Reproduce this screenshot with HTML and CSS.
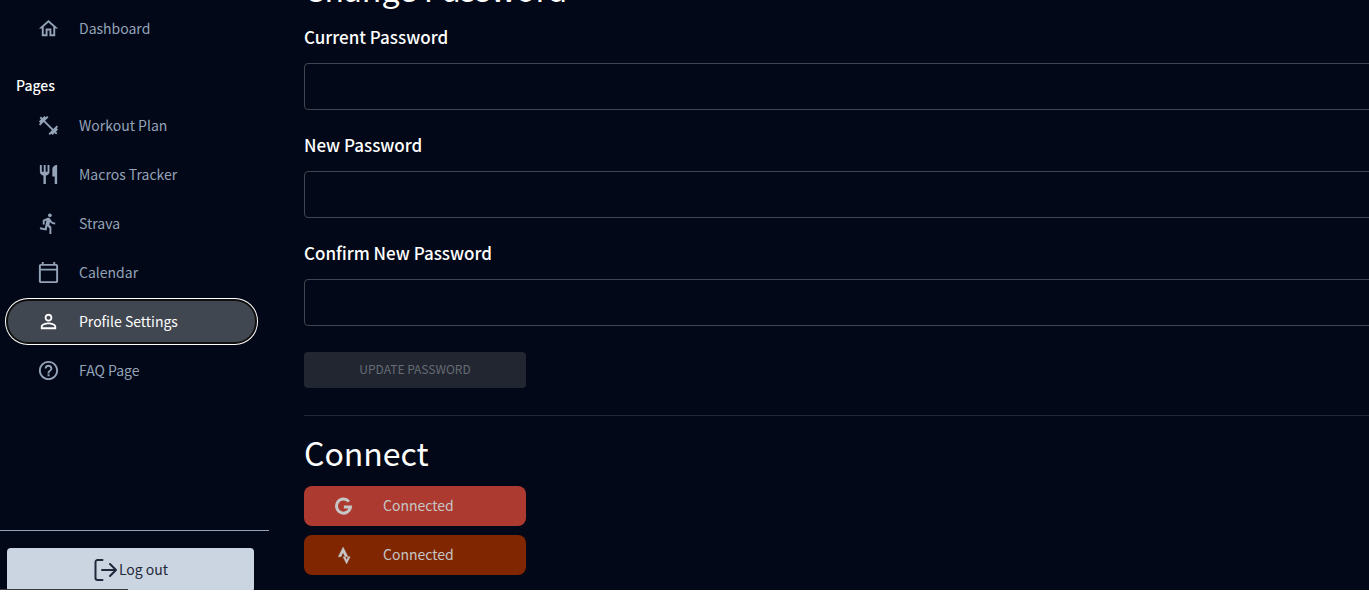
FILE: index.html
```html
<!DOCTYPE html>
<html lang="en">
<head>
<meta charset="utf-8">
<title>Profile Settings</title>
<link rel="stylesheet" href="styles.css">
</head>
<body>
<div class="app">
  <aside class="sidebar">
    <nav class="nav" aria-label="Main">
      <a class="nav-item" href="#dashboard"><svg class="icon" viewBox="0 0 24 24"><path d="M12 5.69l5 4.5V18h-2v-6H9v6H7v-7.81l5-4.5M12 3 2 12h3v8h6v-6h2v6h6v-8h3L12 3z"/></svg><span class="text">Dashboard</span></a>
      <h2 class="nav-title">Pages</h2>
      <a class="nav-item" href="#workout"><svg class="icon" viewBox="0 0 24 24"><path d="M20.57 14.86L22 13.43 20.57 12 17 15.57 8.43 7 12 3.43 10.57 2 9.14 3.43 7.71 2 5.57 4.14 4.14 2.71 2.71 4.14l1.43 1.43L2 7.71l1.43 1.43L2 10.57 3.43 12 7 8.43 15.57 17 12 20.57 13.43 22l1.43-1.43L16.29 22l2.14-2.14 1.43 1.43 1.43-1.43-1.43-1.43L22 16.29z"/></svg><span class="text">Workout Plan</span></a>
      <a class="nav-item" href="#macros"><svg class="icon" viewBox="0 0 24 24"><path d="M11 9H9V2H7v7H5V2H3v7c0 2.12 1.66 3.84 3.75 3.97V22h2.5v-9.03C11.34 12.84 13 11.12 13 9V2h-2v7zm5-3v8h2.5v8H21V2c-2.76 0-5 2.24-5 4z"/></svg><span class="text">Macros Tracker</span></a>
      <a class="nav-item" href="#strava"><svg class="icon" viewBox="0 0 24 24"><path d="M13.49 5.48c1.1 0 2-.9 2-2s-.9-2-2-2-2 .9-2 2 .9 2 2 2zm-3.6 13.9l1-4.4 2.1 2v6h2v-7.5l-2.1-2 .6-3c1.3 1.5 3.3 2.5 5.5 2.5v-2c-1.9 0-3.5-1-4.3-2.4l-1-1.6c-.4-.6-1-1-1.7-1-.3 0-.5.1-.8.1l-5.2 2.2v4.7h2v-3.4l1.8-.7-1.6 8.1-4.9-1-.4 2 7 1.4z"/></svg><span class="text">Strava</span></a>
      <a class="nav-item" href="#calendar"><svg class="icon" viewBox="0 0 24 24"><path d="M20 3h-1V1h-2v2H7V1H5v2H4c-1.1 0-2 .9-2 2v16c0 1.1.9 2 2 2h16c1.1 0 2-.9 2-2V5c0-1.1-.9-2-2-2zm0 18H4V10h16v11zm0-13H4V5h16v3z"/></svg><span class="text">Calendar</span></a>
      <a class="nav-item active" href="#profile" aria-current="page"><svg class="icon" viewBox="0 0 24 24"><path d="M12 5.9c1.16 0 2.1.94 2.1 2.1s-.94 2.1-2.1 2.1S9.9 9.16 9.9 8s.94-2.1 2.1-2.1m0 9c2.97 0 6.1 1.46 6.1 2.1v1.1H5.9V17c0-.64 3.13-2.1 6.1-2.1M12 4C9.79 4 8 5.79 8 8s1.79 4 4 4 4-1.79 4-4-1.79-4-4-4zm0 9c-2.67 0-8 1.34-8 4v3h16v-3c0-2.66-5.33-4-8-4z"/></svg><span class="text">Profile Settings</span></a>
      <a class="nav-item" href="#faq"><svg class="icon" viewBox="0 0 24 24"><path d="M11 18h2v-2h-2v2zm1-16C6.48 2 2 6.48 2 12s4.48 10 10 10 10-4.48 10-10S17.52 2 12 2zm0 18c-4.41 0-8-3.59-8-8s3.59-8 8-8 8 3.59 8 8-3.59 8-8 8zm0-14c-2.21 0-4 1.79-4 4h2c0-1.1.9-2 2-2s2 .9 2 2c0 2-3 1.75-3 5h2c0-2.25 3-2.5 3-5 0-2.21-1.79-4-4-4z"/></svg><span class="text">FAQ Page</span></a>
    </nav>
    <div class="sidebar-footer">
      <button class="logout" type="button"><svg class="logout-icon" viewBox="0 0 24 24"><path d="M9.5 2H4.5a2 2 0 0 0-2 2v16a2 2 0 0 0 2 2h5M9 12h14M17 6l6 6-6 6"/></svg><span class="text">Log out</span></button>
    </div>
    <div class="status-strip"></div>
  </aside>
  <main class="content">
    <h1 class="heading">Change Password</h1>
    <form class="form">
      <div class="field"><label for="current">Current Password</label><input id="current" type="password"></div>
      <div class="field"><label for="new">New Password</label><input id="new" type="password"></div>
      <div class="field"><label for="confirm">Confirm New Password</label><input id="confirm" type="password"></div>
      <button class="update" type="submit" disabled>UPDATE PASSWORD</button>
    </form>
    <hr class="divider">
    <h1 class="heading">Connect</h1>
    <div class="connections">
      <button class="connect google" type="button"><svg class="brand" viewBox="0 0 24 24"><path fill="none" stroke="currentColor" stroke-width="3.4" d="M18.2 6.4A8 8 0 1 0 20 12.6H12.4"/></svg><span class="text">Connected</span></button>
      <button class="connect strava" type="button"><svg class="brand" viewBox="-4 -3 30 30"><path d="M15.387 17.944l-2.089-4.116h-3.065L15.387 24l5.15-10.172h-3.066m-7.008-5.599l2.836 5.598h4.172L10.463 0l-7 13.828h4.169" stroke="currentColor" stroke-width=".5"/></svg><span class="text">Connected</span></button>
    </div>
  </main>
</div>
</body>
</html>
```
FILE: styles.css
```css
* { box-sizing: border-box; }

body {
  margin: 0;
  height: 100vh;
  padding-bottom: 19px;
  background: #fff;
  font-family: "Noto Sans CJK SC", "Noto Sans", sans-serif;
  font-size: 14px;
  line-height: 20px;
  overflow: hidden;
}

button { font: inherit; border: 0; }

.app {
  display: flex;
  height: 100%;
  overflow: hidden;
  background: #020817;
  color: #fff;
}

.sidebar {
  position: relative;
  flex: none;
  display: flex;
  flex-direction: column;
  width: 269px;
}

.nav {
  display: flex;
  flex-direction: column;
  gap: 8px;
  padding: 8px 14px 0 8px;
}

.nav-item {
  display: flex;
  align-items: center;
  gap: 19px;
  height: 41px;
  padding-left: 29px;
  border-radius: 20px;
  color: #94a3b8;
  text-decoration: none;
}

.nav-item.active {
  background: #414751;
  color: #fff;
  box-shadow: 0 0 0 2px #101010, 0 0 0 3px #fff;
}

.text { padding-bottom: 2px; }

.nav-title {
  margin: 18px 8px 2px;
  font-size: 14px;
  font-weight: 500;
}

.icon {
  width: 23px;
  height: 23px;
  fill: currentColor;
}

.sidebar-footer {
  height: 60px;
  margin-top: auto;
  padding: 17px 15px 0 7px;
  border-top: 1px solid #94a3b8;
}

.logout {
  display: flex;
  align-items: center;
  justify-content: center;
  gap: 2px;
  width: 100%;
  height: 44px;
  border-radius: 4px;
  background: #cbd5e1;
  color: #1e293b;
}

.logout-icon {
  width: 24px;
  height: 24px;
  fill: none;
  stroke: #1e293b;
  stroke-width: 2;
  stroke-linecap: round;
  stroke-linejoin: round;
}

.status-strip {
  position: absolute;
  left: 0;
  bottom: 0;
  width: 128px;
  height: 1px;
  background: #3c3c3c;
}

.content {
  flex: 1;
  min-width: 0;
  margin: -32px -16px 0 0;
  padding-left: 35px;
}

.heading {
  margin: 0;
  font-size: 32px;
  font-weight: 400;
  line-height: 40px;
}

.form {
  display: flex;
  flex-direction: column;
  gap: 23px;
  padding-top: 17px;
}

.field {
  display: flex;
  flex-direction: column;
  gap: 14px;
}

.field label {
  font-size: 17px;
  font-weight: 500;
  line-height: 24px;
}

.field input {
  width: 100%;
  height: 47px;
  padding: 0 14px;
  border: 1px solid #414550;
  border-radius: 4px;
  background: transparent;
  color: #fff;
  font: inherit;
}

.update {
  width: 222px;
  height: 36px;
  margin-top: 3px;
  padding-bottom: 3px;
  border-radius: 4px;
  background: #212631;
  color: #666b74;
  font-size: 12px;
}

.divider {
  margin: 27px 0 16px;
  border: 0;
  border-top: 1px solid #222834;
}

.connections {
  display: flex;
  flex-direction: column;
  gap: 9px;
  padding-top: 14px;
}

.connect {
  display: flex;
  align-items: center;
  gap: 29px;
  width: 222px;
  height: 40px;
  padding: 0 0 0 29px;
  border-radius: 8px;
  color: #c6c6c6;
}

.google { background: #ad3a30; }
.strava { background: #802600; }

.brand {
  width: 21px;
  height: 21px;
  fill: currentColor;
}
```
